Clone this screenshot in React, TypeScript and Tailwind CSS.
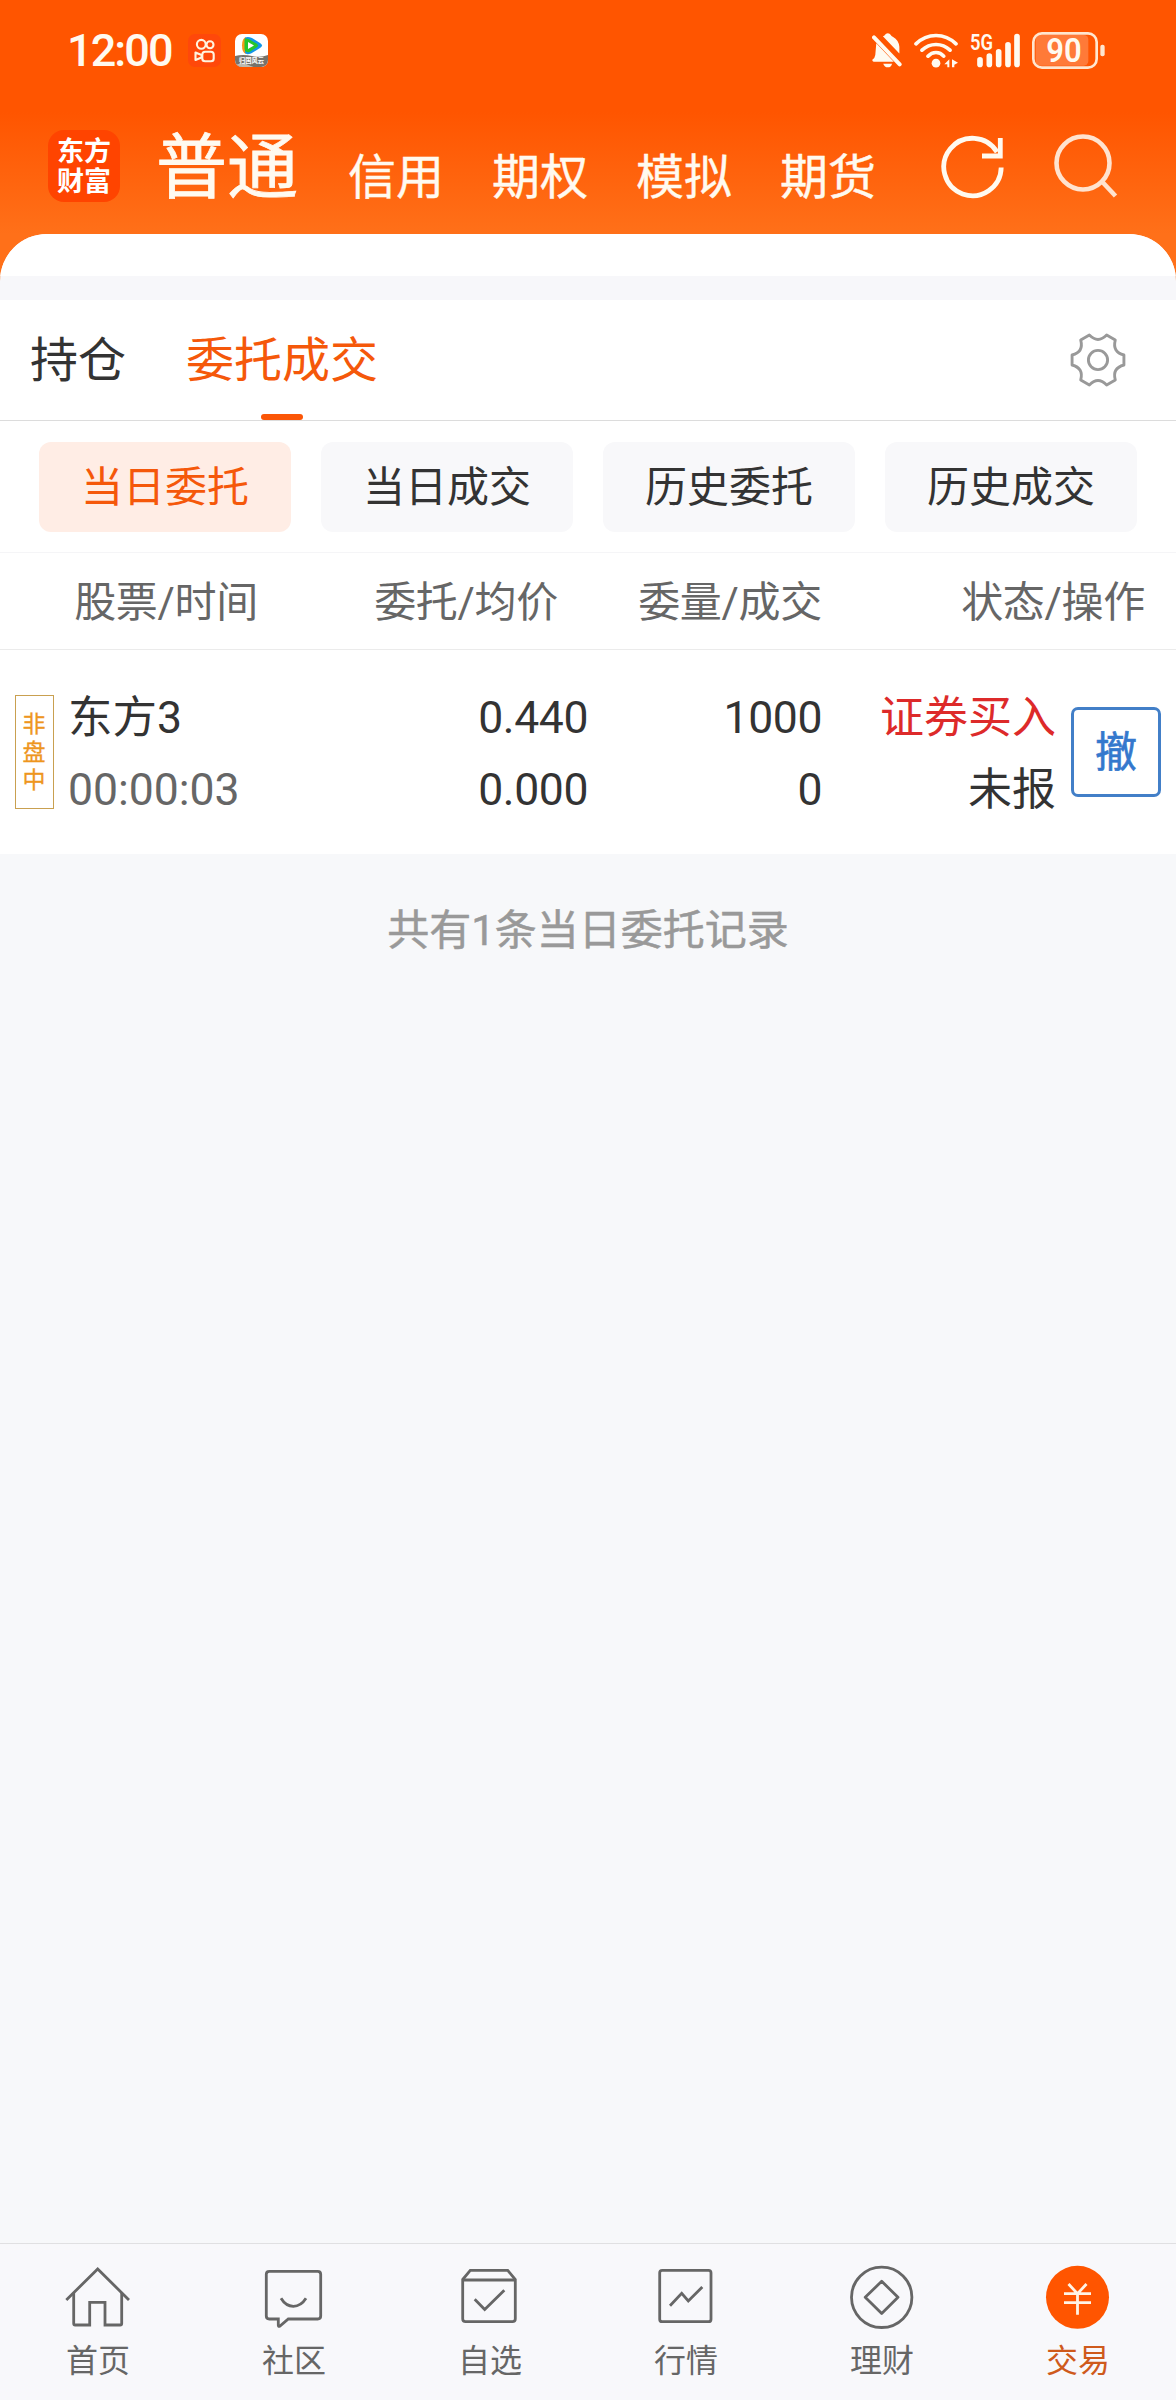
import type { ReactNode } from "react";

interface NavItem {
  label: string;
  icon: ReactNode;
  active?: boolean;
}

const accounts = ["信用", "期权", "模拟", "期货"];
const filters = ["当日委托", "当日成交", "历史委托", "历史成交"];

const navItems: NavItem[] = [
  {
    label: "首页",
    icon: (
      <>
        <path d="M1.3 36 32.7 5 64 36" />
        <path d="M8.7 29v30.5q0 1.5 1.5 1.5h14.5V38.3H40V61h15.2q1.5 0 1.5-1.5V29" />
      </>
    ),
  },
  {
    label: "社区",
    icon: (
      <>
        <path d="M8.3 7.3h48.4q3 0 3 3V52q0 3-3 3H27.3l-8.6 7.3q-1.4.6-1.4-1V55h-9q-3 0-3-3V10.3q0-3 3-3Z" />
        <path d="M20 34.3q4.8 8 12.4 8T45 34.3" />
      </>
    ),
  },
  {
    label: "自选",
    icon: (
      <>
        <path d="M5.7 15.500 13.3 6.3h37.4l7.600 9.200v39.200q0 3-3 3H8.700q-3 0-3-3Z" />
        <path d="M5.7 16h52.600M17.700 35.300l10 10.200 19.600-19.200" />
      </>
    ),
  },
  {
    label: "行情",
    icon: (
      <>
        <rect x="6.7" y="6.3" width="51.3" height="51.4" rx="2.5" />
        <path d="m17 41.700 11.700-12.400 6.600 7.700 14-14" />
      </>
    ),
  },
  {
    label: "理财",
    icon: (
      <>
        <circle cx="32.7" cy="33.3" r="30.2" />
        <path d="m32.700 17.300 16.300 16-16.300 16.200-16.500-16.200Z" strokeLinejoin="round" />
      </>
    ),
  },
  {
    label: "交易",
    active: true,
    icon: (
      <>
        <circle cx="32.5" cy="33.3" r="31.5" fill="#ff5500" stroke="none" />
        <path d="m23.500 20 9 9.700 9-9.700M32.500 29.700v21M19 29.700h27M19 38.700h27" stroke="#fff4e6" />
      </>
    ),
  },
];

const StatusBar = () => (
  <div className="flex h-[100px] items-center pl-[67px] pr-[71px] text-[#fffaf0]">
    <span className="w-[121px] text-[45px] font-medium leading-[45px] tracking-[-1.9px]">12:00</span>
    <svg className="h-[33px] w-[33px]" viewBox="0 0 33 33" fill="none" stroke="#fff4e0" strokeWidth="2.1">
      <rect width="33" height="33" rx="7" fill="#ff480a" stroke="none" />
      <circle cx="13.3" cy="10.3" r="4.4" />
      <circle cx="22" cy="10.8" r="3.5" />
      <rect x="14.3" y="17.800" width="11.400" height="9.400" rx="2.800" />
      <path d="M7.500 18.500v7.500l6-2.500v-2.500Z" strokeLinejoin="round" />
    </svg>
    <svg className="ml-[14px] h-[33px] w-[33px]" viewBox="0 0 33 33">
      <clipPath id="video-icon">
        <rect width="33" height="33" rx="7" />
      </clipPath>
      <g clipPath="url(#video-icon)">
        <rect width="33" height="33" fill="#fff" />
        <path d="M0 22q8-2 17 0t16-1v12H0Z" fill="#77736b" />
        <path d="M0 31q8-3 16 1t17-2v5H0Z" fill="#bcb9b0" />
        <path d="M11 3q-4 1-4 8.500t4 8.500Z" fill="#f79a1c" />
        <path d="M10 4q2-2 7 0l8 5q4 2.500 0 5l-9 5.500q-5 2-6-1Z" fill="#1296e8" />
        <path d="M9.500 5q2-1 5 .5l7 4q3 2 0 4l-7 4.500q-4 1-5-3Z" fill="#25c62c" />
        <path d="m13 8 6 3.500-6 3.500Z" fill="#fff" />
        <text x="16.500" y="29" textAnchor="middle" fontSize="6.300" fontWeight="700" fill="#fff">
          归国风云
        </text>
      </g>
    </svg>

    <div className="ml-auto flex items-center gap-3">
      <svg className="h-[35px] w-[30px]" viewBox="216 96 91 104" fill="currentColor">
        <path d="M249 105q5-1 6-4 3-5 9-5t9 5q1 3 7 6 17 9 19 30v20Z" />
        <path d="M222 108 300 190" stroke="currentColor" strokeWidth="12" strokeLinecap="round" />
        <path d="M229 126 282 182h-61q-5-1-4-6 8-5 9-14Z" />
        <path d="M250 188h27q-3 11-13 11t-14-11Z" />
      </svg>
      <svg className="h-[35px] w-[44px]" viewBox="342 96 132 104" fill="none" stroke="currentColor" strokeWidth="11" strokeLinecap="round">
        <path d="M348 128q26-25 60-25t60 25M366 147q18-17 42-17t42 17M384 165q10-11 24-11t23 11" />
        <circle cx="408" cy="186" r="13" fill="currentColor" stroke="none" />
        <path d="M433 189l15-15v24h-6v-9ZM456 174l18 11-11 6v7h-7Z" fill="currentColor" stroke="none" />
      </svg>
      <svg className="h-[35px] w-[50px] overflow-visible" viewBox="510 96 150 104" fill="none" stroke="currentColor" strokeWidth="17" strokeLinecap="round">
        <path d="M540 176v14M568 165v25M596 152v38M624 131v59M651 106v84" />
        <text x="510" y="147" fontSize="64" fontWeight="600" fill="currentColor" stroke="none" textLength="69" lengthAdjust="spacingAndGlyphs">
          5G
        </text>
      </svg>
      <svg className="h-[37px] w-[73px]" viewBox="696 93 219 111">
        <rect x="707" y="102" width="158" height="92" rx="14" fill="#ff7a38" />
        <rect x="700" y="97" width="190" height="103" rx="26" fill="none" stroke="#ffe6cf" strokeWidth="8" />
        <rect x="901" y="131" width="13" height="35" rx="6" fill="#ffe6cf" />
        <text x="792" y="183" textAnchor="middle" fontSize="98" fontWeight="600" fill="#fffaf0" textLength="106" lengthAdjust="spacingAndGlyphs">
          90
        </text>
      </svg>
    </div>
  </div>
);

const TopNav = () => (
  <div className="flex h-[134px] items-start pl-12 pt-[30px] text-[#fffaf0]">
    <div className="flex h-[72px] w-[72px] flex-col items-center rounded-[16px] bg-[#ff4400] pt-[7px] text-[27px] font-bold leading-[30px] text-white">
      <span>东方</span>
      <span>财富</span>
    </div>
    <h1 className="ml-9 mt-[2px] text-[71px] font-normal leading-[72px] [-webkit-text-stroke:0.8px]">普通</h1>
    {accounts.map((name, i) => (
      <span key={name} className={`${i === 0 ? "ml-[50px]" : "ml-12"} mt-[24px] text-[48px] leading-[48px] [-webkit-text-stroke:0.4px]`}>
        {name}
      </span>
    ))}
    <svg className="ml-[65px] mt-[5px] h-[64px] w-[64px]" viewBox="940 135 64 64" fill="none" stroke="currentColor" strokeWidth="4.800">
      <path d="M1000.200 167.500A28.700 28.700 0 1 1 996 152" />
      <path d="M999.300 138v18H981" />
    </svg>
    <svg className="ml-[48px] mt-[3px] h-[66px] w-[66px]" viewBox="1053 133 66 66" fill="none" stroke="#ffe3cf" strokeWidth="4.600">
      <circle cx="1083" cy="163" r="26.5" />
      <path d="m1101.500 181 14 15" />
    </svg>
  </div>
);

const Tabs = () => (
  <div className="flex h-[121px] items-stretch border-b border-[#dcdcdc] bg-white pl-[30px] pr-[49px] text-[48px] leading-[122px] text-[#333]">
    <span>持仓</span>
    <div className="relative ml-[60px] text-[#f5580a]">
      委托成交
      <span className="absolute bottom-0 left-1/2 h-[6px] w-[42px] -translate-x-1/2 rounded-full bg-[#fb5607]"></span>
    </div>
    <svg className="ml-auto mt-[31px] h-[58px] w-[58px]" viewBox="-29 -29 58 58" fill="none" stroke="#999" strokeWidth="3">
      <g transform="scale(0.96)" strokeLinejoin="round">
        <path d="M-9-26Q0-17 9-26L18-20.800Q14.700-8.500 27-5.200V5.200Q14.700 8.500 18 20.800L9 26Q0 17-9 26L-18 20.800Q-14.700 8.500-27 5.200V-5.200Q-14.700-8.500-18-20.800Z" />
        <circle r="10" />
      </g>
    </svg>
  </div>
);

const Filters = () => (
  <div className="flex h-[132px] gap-[30px] border-b border-[#f5f5f7] bg-white pl-[39px] pt-[21px] text-[42px]">
    {filters.map((name, i) => (
      <button
        key={name}
        className={`h-[90px] w-[252px] rounded-[12px] pt-[2px] leading-[88px] ${i === 0 ? "bg-[#ffede5] text-[#f5580a]" : "bg-[#f8f8fa] text-[#333]"}`}
      >
        {name}
      </button>
    ))}
  </div>
);

const OrderTable = () => (
  <div className="bg-white text-[#333]">
    <div className="flex h-[97px] border-b border-[#ebebeb] text-[42px] leading-[99px] tracking-[-0.3px] text-[#666]">
      <span className="w-[258px] text-right">股票/时间</span>
      <span className="w-[300px] text-right">委托/均价</span>
      <span className="w-[264px] text-right">委量/成交</span>
      <span className="w-[323px] text-right">状态/操作</span>
    </div>
    <div className="flex h-[204px] pl-[15px] pt-[32px] text-[44.5px] leading-[72px]">
      <div className="mt-[13px] flex h-[114px] w-[39px] flex-col items-center border border-[#c9a050] pr-px pt-[15px] text-[23px] leading-[28px] text-[#ee961e] [-webkit-text-stroke:0.3px]">
        <span>非</span>
        <span>盘</span>
        <span>中</span>
      </div>
      <div className="ml-[14px] w-[219px]">
        <div>东方3</div>
        <div className="text-[#666]">00:00:03</div>
      </div>
      <div className="w-[301px] text-right tracking-[-0.4px]">
        <div>0.440</div>
        <div>0.000</div>
      </div>
      <div className="w-[234px] text-right tracking-[-0.4px]">
        <div>1000</div>
        <div>0</div>
      </div>
      <div className="w-[234px] text-right text-[44px]">
        <div className="text-[#dd2a2a]">证券买入</div>
        <div>未报</div>
      </div>
      <button className="ml-[15px] mt-[25px] h-[90px] w-[90px] rounded-[7px] border-[3px] border-[#427fc8] pt-[2px] text-[42px] leading-[82px] text-[#3478cd] [-webkit-text-stroke:0.6px]">
        撤
      </button>
    </div>
  </div>
);

const BottomNav = () => (
  <nav className="flex h-[157px] border-t border-[#e0e0e2] bg-[#f8f8fb]">
    {navItems.map((item) => (
      <div key={item.label} className={`flex flex-1 flex-col items-center pt-5 text-[32px] leading-[62px] ${item.active ? "text-[#cf5a1c]" : "text-[#666]"}`}>
        <svg className="h-[66px] w-[66px]" viewBox="0 0 66 66" fill="none" stroke="currentColor" strokeWidth="2.8">
          {item.icon}
        </svg>
        <span>{item.label}</span>
      </div>
    ))}
  </nav>
);

export default function App() {
  return (
    <div className="flex h-[2400px] w-[1176px] flex-col overflow-hidden bg-[#f7f8fa] font-[Roboto,'Noto_Sans_CJK_SC',sans-serif]">
      <header className="h-[300px] bg-[linear-gradient(180deg,#ff5500_0px,#ff5500_112px,#ff7019_234px)]">
        <StatusBar />
        <TopNav />
        <div className="h-[66px] overflow-hidden rounded-t-[47px] bg-[#f7f7fa]">
          <div className="h-[42px] bg-white"></div>
        </div>
      </header>
      <Tabs />
      <Filters />
      <OrderTable />
      <p className="mt-[47px] text-center text-[42px] leading-[60px] text-[#999] [-webkit-text-stroke:0.5px]">共有1条当日委托记录</p>
      <div className="flex-1"></div>
      <BottomNav />
    </div>
  );
}
